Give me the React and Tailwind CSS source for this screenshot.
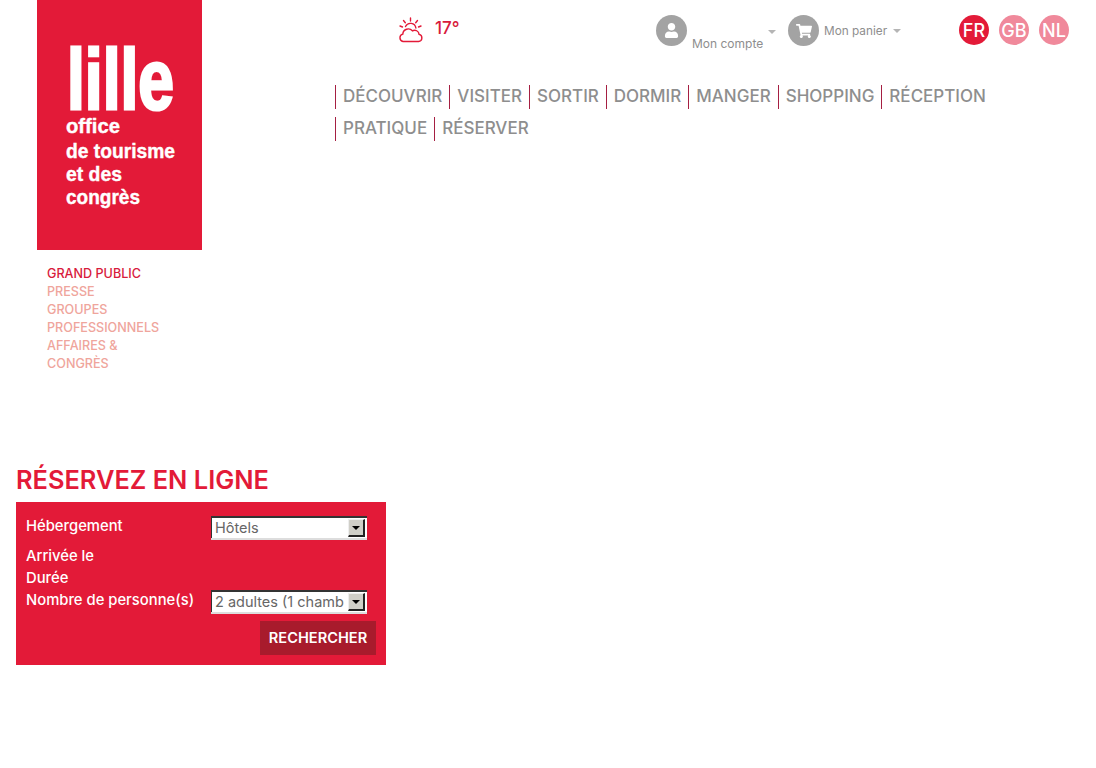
import { FaUser, FaShoppingCart } from "react-icons/fa";

const mainNav = [
  "DÉCOUVRIR",
  "VISITER",
  "SORTIR",
  "DORMIR",
  "MANGER",
  "SHOPPING",
  "RÉCEPTION",
  "PRATIQUE",
  "RÉSERVER",
];

const sideNav = ["PRESSE", "GROUPES", "PROFESSIONNELS", "AFFAIRES & CONGRÈS"];

const Logo = () => (
  <div className="h-[250px] w-[165px] bg-[#e31a38]">
    <svg width="165" height="250" viewBox="0 0 165 250" fill="#fff" fontFamily="'Liberation Sans', sans-serif" fontWeight="700">
      <text x="30" y="109" fontSize="86" textLength="107" lengthAdjust="spacingAndGlyphs" stroke="#fff" strokeWidth="3">lille</text>
      <text x="29" y="133" fontSize="21" textLength="54" lengthAdjust="spacingAndGlyphs" stroke="#fff" strokeWidth="0.4">office</text>
      <text x="29" y="158" fontSize="21" textLength="109" lengthAdjust="spacingAndGlyphs" stroke="#fff" strokeWidth="0.4">de tourisme</text>
      <text x="29" y="181" fontSize="21" textLength="56" lengthAdjust="spacingAndGlyphs" stroke="#fff" strokeWidth="0.4">et des</text>
      <text x="29" y="204" fontSize="21" textLength="74" lengthAdjust="spacingAndGlyphs" stroke="#fff" strokeWidth="0.4">congrès</text>
    </svg>
  </div>
);

const WeatherIcon = () => (
  <svg width="26" height="26" viewBox="0 0 26 26" fill="none" stroke="#e31a38" strokeWidth="1.4" strokeLinecap="round">
    <path d="M5 24.5h15.5a3.6 3.6 0 0 0 .6-7.1 4.5 4.5 0 0 0-6.7-3.6 5.5 5.5 0 0 0-9.6 3.3A3.8 3.8 0 0 0 5 24.5Z" fill="#fff" />
    <path d="M7.5 9.5a5.5 5.5 0 0 1 10.4 1.5" />
    <path d="M12.5 1v3M5.5 3.5l1.8 2.2M19.5 3.5l-1.8 2.2M2 9l2.5 1M23 9l-2.5 1" />
  </svg>
);

const Caret = () => (
  <span className="h-0 w-0 border-x-[4px] border-t-[4px] border-x-transparent border-t-[#b5b5b5]" />
);

const RoundIcon = ({ children }) => (
  <span className="flex h-[31px] w-[31px] shrink-0 items-center justify-center rounded-full bg-[#a3a3a3] text-white">
    {children}
  </span>
);

const LangBadge = ({ label, active }) => (
  <span
    className={
      active
        ? "flex h-[30px] w-[30px] items-center justify-center rounded-full bg-[#e31a38] text-[18px] font-medium text-white"
        : "flex h-[30px] w-[30px] items-center justify-center rounded-full bg-[#f0899b] text-[18px] font-medium text-white"
    }
  >
    {label}
  </span>
);

const FakeSelect = ({ value }) => (
  <div className="flex h-[22px] w-[156px] items-center border-t-2 border-l border-[#333] bg-white pl-[3px] shadow-[0_2px_0_#ddd]">
    <span className="w-[129px] overflow-hidden whitespace-nowrap text-[14.5px] font-normal leading-[20px] text-[#666]">
      {value}
    </span>
    <span className="ml-auto mr-[2px] flex h-[18px] w-[17px] items-center justify-center border border-b-2 border-r-2 border-[#eee] border-b-[#222] border-r-[#222] bg-[#d0cfc8]">
      <span className="h-0 w-0 border-x-[4px] border-t-[4px] border-x-transparent border-t-black" />
    </span>
  </div>
);

const App = () => {
  return (
    <div className="min-h-[768px] bg-white font-['Inter','Liberation_Sans',sans-serif]">
      <div className="flex">
        {/* left column */}
        <div className="ml-[37px] w-[165px] shrink-0">
          <Logo />
          <ul className="mt-[15px] w-[120px] pl-[10px] text-[12.6px] font-medium leading-[18px] text-[#efa59c]">
            <li className="whitespace-nowrap text-[#d81b3c]">GRAND PUBLIC</li>
            {sideNav.map((item) => (
              <li key={item} className="w-[100px]">
                {item === "PROFESSIONNELS" ? <span className="whitespace-nowrap">{item}</span> : item}
              </li>
            ))}
          </ul>
        </div>

        {/* top bar and main menu */}
        <div className="flex-1">
          <div className="flex h-[85px] items-start">
            <div className="ml-[196px] mt-[17px] flex w-[258px] items-start">
              <WeatherIcon />
              <span className="ml-[11px] mt-[1px] text-[17px] font-medium leading-[20px] text-[#d81b3c]">17°</span>
            </div>
            <div className="mt-[15px] flex w-[132px] items-start">
              <RoundIcon>
                <FaUser size={15} />
              </RoundIcon>
              <span className="ml-[5px] mt-[22px] whitespace-nowrap text-[12px] leading-[14px] text-[#8e8e8e]">Mon compte</span>
              <span className="ml-[5px] mt-[15px] flex">
                <Caret />
              </span>
            </div>
            <div className="mt-[15px] flex w-[171px] items-start">
              <RoundIcon>
                <FaShoppingCart size={16} />
              </RoundIcon>
              <span className="ml-[5px] mt-[9px] whitespace-nowrap text-[11.8px] leading-[14px] text-[#8e8e8e]">Mon panier</span>
              <span className="ml-[6px] mt-[14px] flex">
                <Caret />
              </span>
            </div>
            <div className="mt-[15px] flex gap-[10px]">
              <LangBadge label="FR" active />
              <LangBadge label="GB" />
              <LangBadge label="NL" />
            </div>
          </div>
          <nav className="ml-[133px] flex w-[670px] flex-wrap">
            {mainNav.map((item) => (
              <div key={item} className="mb-[8px] flex h-[24px] items-center border-l border-[#a51f42] px-[7px]">
                <a className="whitespace-nowrap text-[17px] font-medium text-[#8e8e8e]">{item}</a>
              </div>
            ))}
          </nav>
        </div>
      </div>

      {/* booking box */}
      <h2 className="ml-[16px] mt-[92px] text-[25.4px] font-semibold leading-[30px] text-[#e31a38]">RÉSERVEZ EN LIGNE</h2>
      <form className="ml-[16px] mt-[7px] w-[370px] bg-[#e31a38] p-[10px] text-[14.8px] font-medium leading-[22px] text-white">
        <div className="flex h-[33px]">
          <span className="mt-[3px] w-[185px]">Hébergement</span>
          <div className="mt-[4px]">
            <FakeSelect value="Hôtels" />
          </div>
        </div>
        <div>Arrivée le</div>
        <div>Durée</div>
        <div className="flex h-[22px]">
          <span className="w-[185px] whitespace-nowrap">Nombre de personne(s)</span>
          <div className="mt-[1px]">
            <FakeSelect value="2 adultes (1 chambre)" />
          </div>
        </div>
        <div className="mt-[10px] flex justify-end">
          <button type="button" className="h-[34px] w-[116px] bg-[#a81b2c] text-[14.6px] font-semibold text-white">
            RECHERCHER
          </button>
        </div>
      </form>
    </div>
  );
};

export default App;
